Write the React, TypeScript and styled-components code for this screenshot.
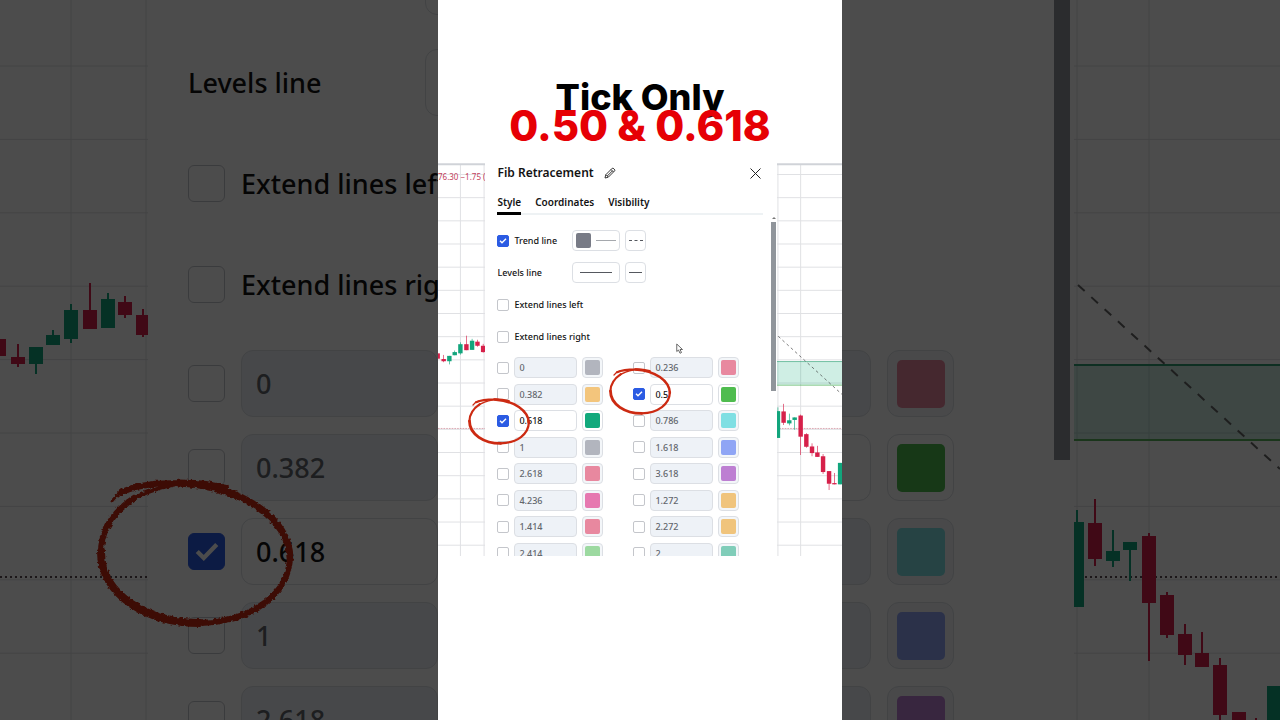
import React from "react";
import styled, { createGlobalStyle, css, ThemeProvider } from "styled-components";

const compact = {
  font: 9, row: 21, rowGap: 11, box: 12, gap: 5, field: 63, radius: 4, boxRadius: 2,
  swatch: 15, swatchRadius: 2, pad: 4, lineBtn: 48, lineCol: 75, styleBtn: 21, tick: 8,
};
const large = {
  font: 27, row: 67, rowGap: 34, box: 37, gap: 16, field: 197, radius: 12, boxRadius: 6,
  swatch: 48, swatchRadius: 5, pad: 14, lineBtn: 150, lineCol: 237, styleBtn: 68, tick: 26,
};
type Sizes = typeof compact;
type T = { theme: Sizes };

const Global = createGlobalStyle`
  * { box-sizing: border-box; }
  body { margin: 0; background: #fff; font-family: "Noto Sans", "Open Sans", sans-serif; }
  button, input { font: inherit; color: inherit; margin: 0; }
`;

const Page = styled.main`
  display: grid;
  grid-template-columns: minmax(0, 1fr) 404px minmax(0, 1fr);
  height: 100vh;
  overflow: hidden;
`;

const Side = styled.section`
  position: relative;
  display: flex;
  min-width: 0;
  overflow: hidden;
  background: #fff;
  &::after {
    content: "";
    position: absolute;
    inset: 0;
    background: rgba(0, 0, 0, 0.7);
    z-index: 2;
  }
`;

const SideChart = styled.svg<{ $grow?: boolean }>`
  flex: ${(p) => (p.$grow ? "1 1 0" : "0 0 148px")};
  min-width: 0;
  height: 100%;
`;

const SideForm = styled.div`
  flex: 1 0 0;
  margin-top: -52px;
  padding-left: 40px;
`;

const SideList = styled.div`
  margin-top: 32px;
`;

const SideLevels = styled.div`
  display: flex;
  justify-content: flex-end;
  flex: 0 0 212px;
  min-width: 0;
  padding: 350px 100px 0 0;
`;

const Phone = styled.section`
  display: flex;
  flex-direction: column;
  min-width: 0;
  background: #fff;
`;

const Headline = styled.h1`
  flex: 0 0 163px;
  margin: 0;
  padding-top: 81px;
  text-align: center;
  font-family: Inter, sans-serif;
  font-size: 36px;
  line-height: 32px;
  font-weight: 800;
  color: #000;
`;

const HeadlineAccent = styled.span`
  position: relative;
  display: block;
  font-size: 42px;
  line-height: 26px;
  color: #e60005;
`;

const Scene = styled.div`
  position: relative;
  display: flex;
  height: 393px;
  overflow: hidden;
`;

const SceneChart = styled.svg`
  position: absolute;
  inset: 0;
  width: 100%;
  height: 100%;
`;

const Quote = styled.div`
  position: relative;
  display: flex;
  justify-content: flex-end;
  flex: 0 0 47px;
  padding-top: 8px;
  font-size: 8px;
  line-height: 12px;
  white-space: nowrap;
  color: #c2405a;
`;

const Dialog = styled.div`
  position: relative;
  flex: 1;
  margin-right: 65px;
  background: #fff;
  color: #131313;
`;

const TitleBar = styled.header`
  display: flex;
  align-items: center;
  gap: 10px;
  height: 20px;
  padding: 0 16px 0 12px;
`;

const Title = styled.h2`
  margin: 0;
  font-size: 12px;
  line-height: 20px;
  font-weight: 600;
`;

const IconButton = styled.button<{ $end?: boolean }>`
  display: flex;
  padding: 0;
  border: 0;
  background: none;
  ${(p) => p.$end && css`margin-left: auto;`}
`;

const Tabs = styled.nav`
  display: flex;
  gap: 14px;
  margin: 12px 14px 0 12px;
  box-shadow: inset 0 -2px #eef2f4;
`;

const Tab = styled.button<{ $active?: boolean }>`
  padding: 0 0 3px;
  border: 0;
  border-bottom: 3px solid ${(p) => (p.$active ? "#000" : "transparent")};
  background: none;
  font-size: 10px;
  line-height: 14px;
  font-weight: 600;
`;

const Body = styled.div`
  display: flex;
  justify-content: space-between;
  padding: 0 1px 0 12px;
`;

const Form = styled.div`
  padding-top: 15px;
`;

const Options = styled.div<T>`
  display: flex;
  flex-direction: column;
  gap: ${(p) => p.theme.rowGap}px;
`;

const Option = styled.div<T>`
  display: flex;
  align-items: center;
  gap: ${(p) => p.theme.gap}px;
  height: ${(p) => p.theme.row}px;
  font-size: ${(p) => p.theme.font}px;
  font-weight: 500;
  white-space: nowrap;
  color: #131313;
`;

const OptionName = styled.div<T>`
  display: flex;
  align-items: center;
  gap: ${(p) => p.theme.gap}px;
  flex: 0 0 auto;
  min-width: ${(p) => p.theme.lineCol - p.theme.gap}px;
`;

const TickCell = styled.span<T>`
  position: relative;
  flex: 0 0 ${(p) => p.theme.box}px;
  height: ${(p) => p.theme.box}px;
`;

const TickBox = styled.input<T>`
  display: block;
  appearance: none;
  width: 100%;
  height: 100%;
  border: 1px solid #c4c6cb;
  border-radius: ${(p) => p.theme.boxRadius}px;
  background: #fff;
  &:checked { background: #2b5be3; border-color: #2b5be3; }
`;

const TickMark = styled.svg<T>`
  position: absolute;
  inset: 0;
  margin: auto;
  width: ${(p) => p.theme.tick}px;
  height: ${(p) => p.theme.tick}px;
  pointer-events: none;
`;

const boxed = css<T>`
  height: ${(p) => p.theme.row}px;
  border: 1px solid #dcdfe4;
  border-radius: ${(p) => p.theme.radius}px;
`;

const LineButton = styled.button<T & { $narrow?: boolean }>`
  ${boxed}
  display: flex;
  align-items: center;
  justify-content: center;
  gap: ${(p) => p.theme.gap}px;
  flex: 0 0 ${(p) => (p.$narrow ? p.theme.styleBtn : p.theme.lineBtn)}px;
  padding: 0;
  background: #fff;
`;

const Swatch = styled.span<T & { $color: string }>`
  width: ${(p) => p.theme.swatch}px;
  height: ${(p) => p.theme.swatch}px;
  border-radius: ${(p) => p.theme.swatchRadius}px;
  background: ${(p) => p.$color};
`;

const LineSample = styled.span<{ $width: number; $dashed?: boolean; $soft?: boolean }>`
  width: ${(p) => p.$width}px;
  border-top: 1px ${(p) => (p.$dashed ? "dashed" : "solid")} ${(p) => (p.$soft ? "#a5a8ad" : "#55585e")};
`;

const LevelGrid = styled.div`
  display: flex;
  gap: 30px;
  margin-top: 10px;
`;

const LevelColumn = styled.div<T & { $height: number }>`
  display: flex;
  flex-direction: column;
  flex-shrink: 0;
  justify-content: space-between;
  height: ${(p) => p.$height}px;
`;

const LevelRow = styled.div<T>`
  display: flex;
  align-items: center;
  gap: ${(p) => p.theme.gap}px;
  font-size: ${(p) => p.theme.font}px;
  font-weight: 500;
`;

const LevelInput = styled.input<T & { $on?: boolean }>`
  ${boxed}
  width: ${(p) => p.theme.field}px;
  padding: 0 ${(p) => p.theme.pad}px;
  background: ${(p) => (p.$on ? "#fff" : "#eef2f7")};
  color: ${(p) => (p.$on ? "#131313" : "#62666c")};
`;

const ColorButton = styled.button<T & { $on?: boolean }>`
  ${boxed}
  display: flex;
  align-items: center;
  justify-content: center;
  width: ${(p) => p.theme.row}px;
  padding: 0;
  background: ${(p) => (p.$on ? "#fff" : "#f3f6f9")};
`;

const ScrollBar = styled.div`
  position: relative;
  flex: 0 0 5px;
  height: 176px;
  padding-top: 7px;
  background: #90959b content-box;
  &::before {
    content: "";
    position: absolute;
    left: 1px;
    top: 2px;
    border: 2px solid transparent;
    border-top: 0;
    border-bottom-color: #777;
  }
`;

const SideScrollBar = styled.div`
  flex: 0 0 16px;
  margin-right: 4px;
  height: 460px;
  background: #90959b;
`;

const RingMark = styled.svg<{ $x: number; $y: number; $w: number }>`
  position: absolute;
  left: ${(p) => p.$x}px;
  top: ${(p) => p.$y}px;
  width: ${(p) => p.$w}px;
  aspect-ratio: 210 / 165;
  z-index: 1;
  overflow: visible;
  pointer-events: none;
`;

const Pointer = styled.svg`
  position: absolute;
  left: 238px;
  top: 180px;
`;

type RingPlace = { x: number; y: number; w: number };

function Ring({ x, y, w }: RingPlace) {
  const id = `rough${w}`;
  const extra = w > 100 ? 0 : 1;
  return (
    <RingMark $x={x} $y={y} $w={w} viewBox="90 470 210 165" fill="none" stroke="#cc2a12" strokeLinecap="round">
      <filter id={id} x="-10%" y="-10%" width="120%" height="120%" colorInterpolationFilters="sRGB">
        <feTurbulence type="fractalNoise" baseFrequency="0.3" numOctaves="2" seed="4" />
        <feDisplacementMap in="SourceGraphic" scale={w > 100 ? 4 : 1} xChannelSelector="R" yChannelSelector="G" />
      </filter>
      <g filter={`url(#${id})`}>
        <path strokeWidth={3 + extra} d="M112 502C117 495 124 491 132 489" />
        <path strokeWidth={6 + extra} d="M122 493C140 485 160 484 180 484C200 483 214 486 226 489" />
        <path strokeWidth={4 + extra} d="M176 485C158 489 142 494 130 502" />
        <path strokeWidth={6 + extra} d="M134 499C112 514 101 532 101 553" />
        <path strokeWidth={8 + extra} d="M101 553C101 596 148 624 200 624" />
        <path strokeWidth={6 + extra} d="M200 624C254 622 289 594 290 558" />
        <path strokeWidth={7 + extra} d="M290 558C288 520 244 488 180 484" />
      </g>
    </RingMark>
  );
}

function Tick({ on, id, name, ring }: { on?: boolean; id?: string; name?: string; ring?: RingPlace }) {
  return (
    <TickCell>
      <TickBox type="checkbox" id={id} aria-label={name} defaultChecked={on} />
      {on && (
        <TickMark viewBox="0 0 24 24" fill="none" stroke="#fff" strokeWidth="4">
          <path d="M3 11.500l6 6L21 5" />
        </TickMark>
      )}
      {ring && <Ring {...ring} />}
    </TickCell>
  );
}

type Level = [value: string, color: string, on?: boolean];

const leftLevels: Level[] = [
  ["0", "#b2b5be"], ["0.382", "#f3c57c"], ["0.618", "#12a97c", true], ["1", "#b2b5be"],
  ["2.618", "#e8889f"], ["4.236", "#e678b0"], ["1.414", "#e8889f"], ["2.414", "#9cd9a0"],
];
const rightLevels: Level[] = [
  ["0.236", "#e8889f"], ["0.5", "#4fbc4f", true], ["0.786", "#7fdfe3"], ["1.618", "#8fa5f5"],
  ["3.618", "#bd7fd2"], ["1.272", "#f0c47c"], ["2.272", "#f0c47c"], ["2", "#80cdb9"],
];

function Levels({ items, height, ring }: { items: Level[]; height: number; ring?: RingPlace }) {
  return (
    <LevelColumn $height={height}>
      {items.map(([value, color, on]) => (
        <LevelRow key={value}>
          <Tick on={on} name={`Show level ${value}`} ring={on ? ring : undefined} />
          <LevelInput $on={on} defaultValue={value} aria-label={`Level ${value}`} />
          <ColorButton $on={on} aria-label={`Colour of level ${value}`}>
            <Swatch $color={color} />
          </ColorButton>
        </LevelRow>
      ))}
    </LevelColumn>
  );
}

function LineOptions({ prefix, factor }: { prefix: string; factor: number }) {
  return (
    <Options>
      <Option>
        <OptionName>
          <Tick on id={`${prefix}-trend`} />
          <label htmlFor={`${prefix}-trend`}>Trend line</label>
        </OptionName>
        <LineButton aria-label="Trend line colour">
          <Swatch $color="#787b86" />
          <LineSample $width={20 * factor} $soft />
        </LineButton>
        <LineButton $narrow aria-label="Trend line style">
          <LineSample $width={14 * factor} $dashed />
        </LineButton>
      </Option>
      <Option>
        <OptionName>Levels line</OptionName>
        <LineButton aria-label="Levels line width">
          <LineSample $width={32 * factor} />
        </LineButton>
        <LineButton $narrow aria-label="Levels line style">
          <LineSample $width={13 * factor} />
        </LineButton>
      </Option>
      <Option>
        <Tick id={`${prefix}-left`} />
        <label htmlFor={`${prefix}-left`}>Extend lines left</label>
      </Option>
      <Option>
        <Tick id={`${prefix}-right`} />
        <label htmlFor={`${prefix}-right`}>Extend lines right</label>
      </Option>
    </Options>
  );
}

/* left edge, width, body top, body bottom, wick top, wick bottom, rising */
const candles: [number, number, number, number, number, number, boolean][] = [
  [-8, 14, 339, 356, 339, 356, false],
  [11, 14, 357, 364, 344, 367, false],
  [29, 14, 347, 364, 347, 374, true],
  [46, 14, 335, 345, 330, 345, true],
  [64, 14, 310, 339, 304, 343, true],
  [83, 14, 310, 329, 283, 329, false],
  [101, 14, 299, 328, 293, 328, true],
  [118, 14, 302, 315, 296, 318, false],
  [136, 14, 315, 335, 309, 337, false],
  [1070, 14, 522, 607, 510, 607, true],
  [1088, 14, 523, 559, 499, 566, false],
  [1106, 14, 551, 561, 530, 567, true],
  [1123, 14, 542, 550, 542, 581, true],
  [1142, 14, 536, 603, 533, 661, false],
  [1160, 14, 595, 635, 592, 638, false],
  [1178, 14, 634, 655, 624, 665, false],
  [1195, 14, 653, 667, 632, 667, false],
  [1213, 14, 665, 715, 658, 721, false],
  [1232, 14, 712, 752, 712, 772, false],
  [1249, 14, 750, 754, 718, 754, false],
  [1267, 14, 686, 754, 686, 754, true],
];

function Chart({ priceLine, trendLine }: { priceLine: string; trendLine: string }) {
  return (
    <>
      <g stroke="#e0e1e4" strokeWidth="1">
        {Array.from({ length: 17 }, (_, i) => {
          const y = 66 + (i - 4) * 73.4;
          return <line key={i} x1="0" x2="1280" y1={y} y2={y} vectorEffect="non-scaling-stroke" />;
        })}
        {[71, 146, 1077, 1149].map((x) => (
          <line key={x} x1={x} x2={x} y1="-260" y2="985" vectorEffect="non-scaling-stroke" />
        ))}
      </g>
      <line x1="0" x2="1280" y1="-260" y2="-260" stroke="#d0d3d8" strokeWidth="6" />
      <rect x="1074" y="365" width="206" height="75" fill="#10aa78" fillOpacity="0.2" />
      <line x1="1074" x2="1280" y1="365" y2="365" stroke="#2f9f74" strokeWidth="2" />
      <line x1="1074" x2="1280" y1="440" y2="440" stroke="#57b35a" strokeWidth="2" />
      <line x1="1078" x2="1280" y1="285" y2="469" stroke={trendLine} strokeWidth="2" strokeDasharray="9 9" />
      <line x1="0" x2="1280" y1="577" y2="577" stroke={priceLine} strokeWidth="2" strokeDasharray="2 3" />
      {candles.map(([x, w, top, bottom, high, low, up]) => (
        <g key={x} fill={up ? "#12a57c" : "#d6204a"}>
          <rect x={x + w / 2 - 1} y={high} width="2" height={low - high} />
          <rect x={x} y={top} width={w} height={bottom - top} />
        </g>
      ))}
    </>
  );
}

export default function App() {
  return (
    <Page>
      <Global />
      <ThemeProvider theme={large}>
        <Side>
          <SideChart viewBox="0 0 148 720" preserveAspectRatio="xMinYMin slice">
            <Chart priceLine="#5c4a50" trendLine="#666" />
          </SideChart>
          <SideForm>
            <LineOptions prefix="wide" factor={3} />
            <SideList>
              <Levels items={leftLevels.slice(0, 5)} height={403} ring={{ x: -98, y: -64, w: 210 }} />
            </SideList>
          </SideForm>
        </Side>
      </ThemeProvider>

      <ThemeProvider theme={compact}>
        <Phone>
          <Headline>
            Tick Only
            <HeadlineAccent>0.50 &amp; 0.618</HeadlineAccent>
          </Headline>
          <Scene>
            <SceneChart viewBox="0 -264 1280 1245" preserveAspectRatio="none">
              <Chart priceLine="#b0304a" trendLine="#333" />
            </SceneChart>
            <Quote>76.30 −1.75 (</Quote>
            <Dialog>
              <TitleBar>
                <Title>Fib Retracement</Title>
                <IconButton aria-label="Rename">
                  <svg width="12" height="12" viewBox="0 0 24 24" fill="none" stroke="#222" strokeWidth="1.8">
                    <path d="M2 22l1.500-6.500L16.500 2.500c1.500-1.500 6.500 3.500 5 5L8.500 20.500zM14 5l5 5M4 15.500l4.500 4.500M17 7.500L6.500 18" />
                  </svg>
                </IconButton>
                <IconButton $end aria-label="Close">
                  <svg width="11" height="11" viewBox="0 0 11 11" stroke="#222" strokeWidth="1">
                    <path d="M0.500 0.500l10 10M10.500 0.500l-10 10" />
                  </svg>
                </IconButton>
              </TitleBar>
              <Tabs>
                <Tab $active>Style</Tab>
                <Tab>Coordinates</Tab>
                <Tab>Visibility</Tab>
              </Tabs>
              <Body>
                <Form>
                  <LineOptions prefix="main" factor={1} />
                  <LevelGrid>
                    <Levels items={leftLevels} height={207} ring={{ x: -31, y: -20, w: 66 }} />
                    <Levels items={rightLevels} height={207} ring={{ x: -26, y: -23, w: 66 }} />
                  </LevelGrid>
                </Form>
                <ScrollBar />
              </Body>
            </Dialog>
            <Pointer width="7" height="11" viewBox="0 0 14 22" fill="#fff" stroke="#444" strokeWidth="1.6">
              <path d="M1.500 2v15l3.500-3 3 6.500 3-1.500-3-6h5z" />
            </Pointer>
          </Scene>
        </Phone>
      </ThemeProvider>

      <ThemeProvider theme={large}>
        <Side>
          <SideLevels>
            <Levels items={rightLevels.slice(0, 5)} height={403} />
          </SideLevels>
          <SideScrollBar />
          <SideChart $grow viewBox="1074 0 206 720" preserveAspectRatio="xMinYMin slice">
            <Chart priceLine="#5c4a50" trendLine="#666" />
          </SideChart>
        </Side>
      </ThemeProvider>
    </Page>
  );
}
